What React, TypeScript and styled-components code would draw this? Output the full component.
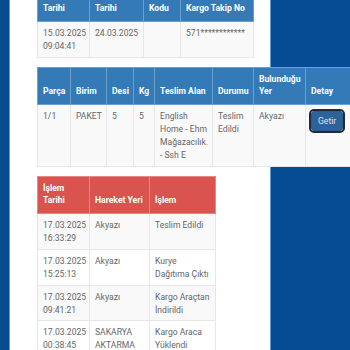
import React from 'react';
import styled, { createGlobalStyle } from 'styled-components';

const GlobalStyle = createGlobalStyle`
    html, body {
        margin: 0;
        padding: 0;
        overflow: hidden;
        background: #064c93;
        font-family: Roboto, "Liberation Sans", Arial, sans-serif;
    }
`;

const Page = styled.div`
    display: flex;
    height: 350px;
    padding-left: 9px;
`;

const Panel = styled.main`
    width: 233px;
    flex: none;
    background: #fff;
    border-left: 1px solid #5c9bd6;
    border-right: 1px solid #5c9bd6;
    padding-left: 27px;
    margin-top: -4px;
    display: flex;
    flex-direction: column;
    gap: 9px;
`;

const Table = styled.table<{ $width: number }>`
    width: ${(p) => p.$width}px;
    table-layout: fixed;
    border-collapse: collapse;
    font-size: 8.6px;
    line-height: 12.85px;
    color: #666;
    flex: none;
`;

const Th = styled.th<{ $tone: 'blue' | 'red' }>`
    background: ${(p) => (p.$tone === 'blue' ? '#337ab7' : '#d9534f')};
    color: #fff;
    font-weight: 700;
    text-align: left;
    vertical-align: bottom;
    padding: 5px 4px 6px 5px;
    border: 1px solid ${(p) => (p.$tone === 'blue' ? '#6d9fcc' : '#e58784')};
`;

const Tr = styled.tr`
    &:nth-child(odd) {
        background: #f9f9f9;
    }
`;

const Td = styled.td`
    padding: 5px 4px 4px 5px;
    vertical-align: top;
    border: 1px solid #e6e6e6;
`;

const Getir = styled.button`
    display: block;
    font-family: inherit;
    font-size: 8.6px;
    line-height: 12px;
    color: #d8e4f0;
    background: #2d6399;
    border: 1px solid #2a5b8c;
    border-radius: 3px;
    padding: 3px 6px;
    margin: 1px 0 0 0;
    outline: 2px solid #1d2b3b;
    outline-offset: 0;
`;

interface Col {
    label: React.ReactNode;
    width: number;
}

const cargoCols: Col[] = [
    { label: 'Tarihi', width: 52 },
    { label: 'Tarihi', width: 54 },
    { label: 'Kodu', width: 37 },
    { label: 'Kargo Takip No', width: 73 },
];

const pieceCols: Col[] = [
    { label: 'Parça', width: 33 },
    { label: 'Birim', width: 36 },
    { label: 'Desi', width: 27 },
    { label: 'Kg', width: 21 },
    { label: 'Teslim Alan', width: 58 },
    { label: 'Durumu', width: 41 },
    { label: 'Bulunduğu Yer', width: 52 },
    { label: 'Detay', width: 50 },
];

const moveCols: Col[] = [
    { label: 'İşlem Tarihi', width: 52 },
    { label: 'Hareket Yeri', width: 60 },
    { label: 'İşlem', width: 66 },
];

const moves = [
    { date: '17.03.2025', time: '16:33:29', place: 'Akyazı', action: 'Teslim Edildi' },
    { date: '17.03.2025', time: '15:25:13', place: 'Akyazı', action: 'Kurye Dağıtıma Çıktı' },
    { date: '17.03.2025', time: '09:41:21', place: 'Akyazı', action: 'Kargo Araçtan İndirildi' },
    { date: '17.03.2025', time: '00:38:45', place: 'SAKARYA AKTARMA', action: 'Kargo Araca Yüklendi' },
];

function total(cols: Col[]): number {
    return cols.reduce((sum, c) => sum + c.width, 0);
}

function Head({ cols, tone }: { cols: Col[]; tone: 'blue' | 'red' }) {
    return (
        <>
            <colgroup>
                {cols.map((c, i) => (
                    <col key={i} style={{ width: c.width }} />
                ))}
            </colgroup>
            <thead>
                <tr>
                    {cols.map((c, i) => (
                        <Th key={i} $tone={tone}>
                            {c.label}
                        </Th>
                    ))}
                </tr>
            </thead>
        </>
    );
}

export default function App() {
    return (
        <Page>
            <GlobalStyle />
            <Panel>
                <Table $width={total(cargoCols)}>
                    <Head cols={cargoCols} tone="blue" />
                    <tbody>
                        <Tr>
                            <Td>
                                15.03.2025
                                <br />
                                09:04:41
                            </Td>
                            <Td>24.03.2025</Td>
                            <Td />
                            <Td>571************</Td>
                        </Tr>
                    </tbody>
                </Table>

                <Table $width={total(pieceCols)}>
                    <Head cols={pieceCols} tone="blue" />
                    <tbody>
                        <Tr>
                            <Td>1/1</Td>
                            <Td>PAKET</Td>
                            <Td>5</Td>
                            <Td>5</Td>
                            <Td>English Home - Ehm Mağazacılık. - Ssh E</Td>
                            <Td>Teslim Edildi</Td>
                            <Td>Akyazı</Td>
                            <Td>
                                <Getir type="button">Getir</Getir>
                            </Td>
                        </Tr>
                    </tbody>
                </Table>

                <Table $width={total(moveCols)}>
                    <Head cols={moveCols} tone="red" />
                    <tbody>
                        {moves.map((m, i) => (
                            <Tr key={i}>
                                <Td>
                                    {m.date}
                                    <br />
                                    {m.time}
                                </Td>
                                <Td>{m.place}</Td>
                                <Td>{m.action}</Td>
                            </Tr>
                        ))}
                    </tbody>
                </Table>
            </Panel>
        </Page>
    );
}
